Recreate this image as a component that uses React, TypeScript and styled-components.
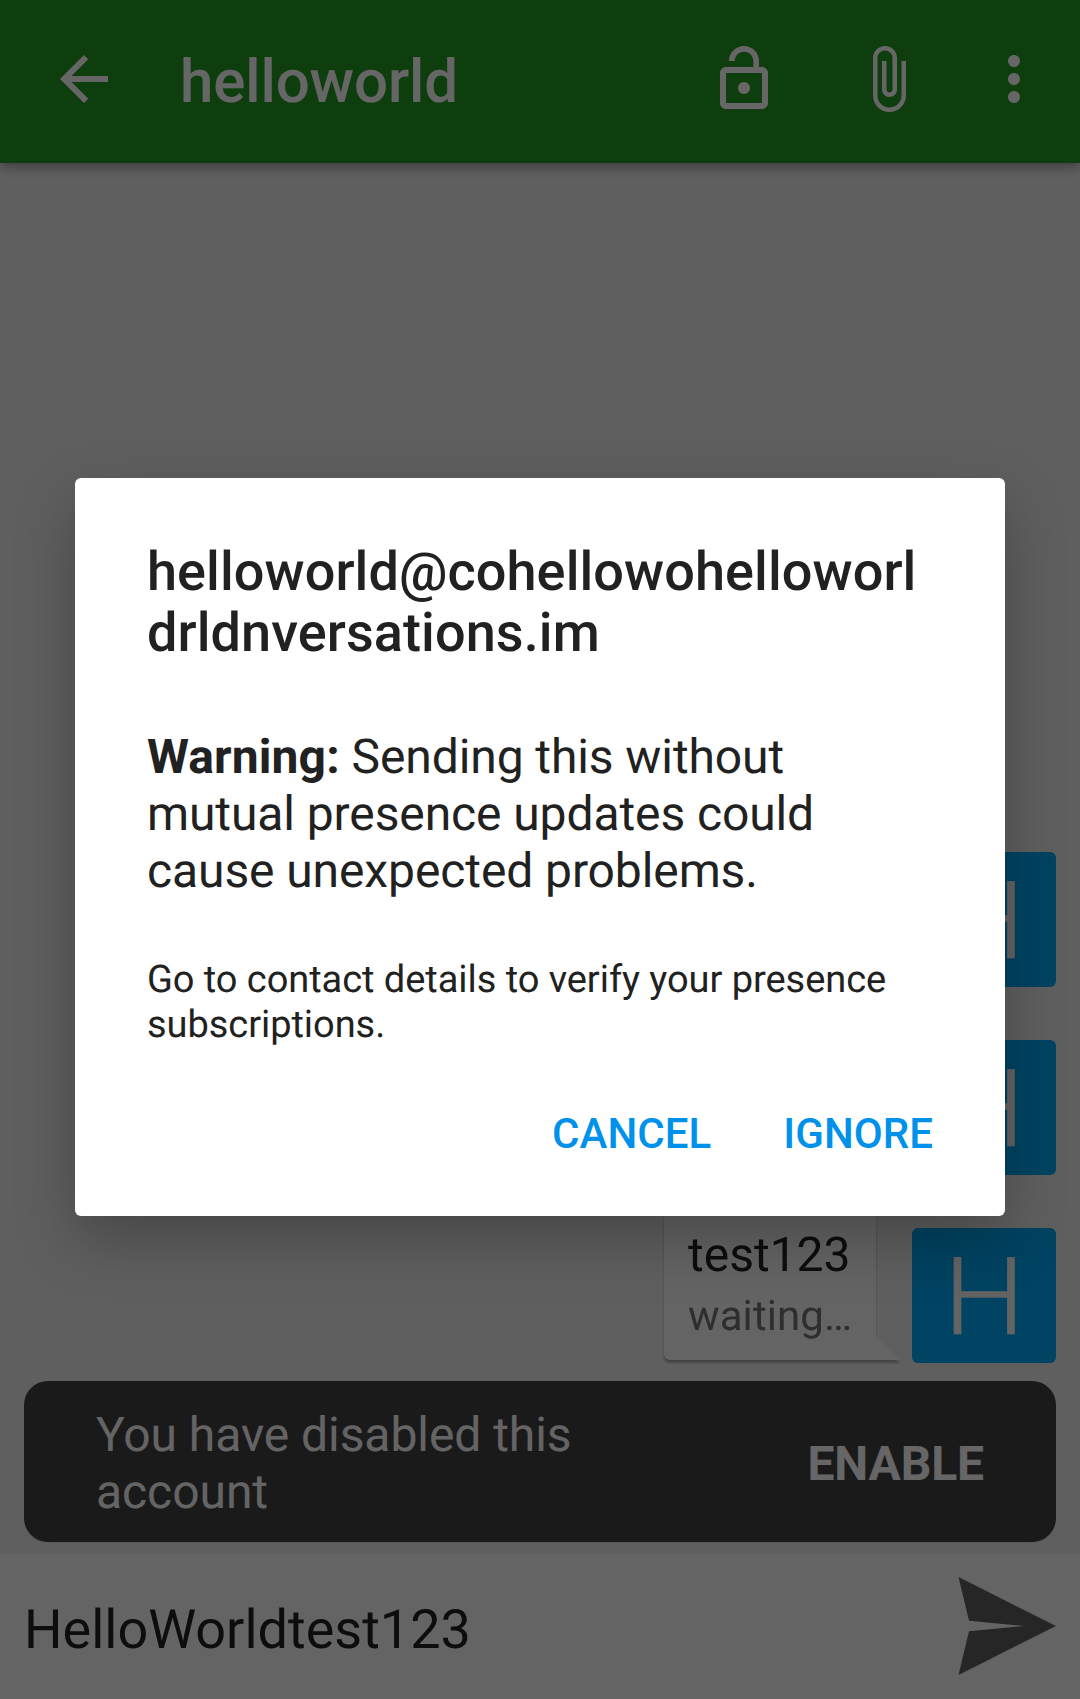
import React from 'react';
import styled, { createGlobalStyle } from 'styled-components';

const GlobalStyle = createGlobalStyle`
  html, body { margin: 0; padding: 0; }
  body { font-family: Roboto, "Noto Sans", sans-serif; text-rendering: geometricPrecision; }
  * { box-sizing: border-box; }
  h1, h2, p { margin: 0; }
  button { border: 0; padding: 0; background: none; font-family: inherit; }
`;

const Screen = styled.div`
  position: relative;
  width: 1080px;
  height: 1699px;
  overflow: hidden;
  display: flex;
  flex-direction: column;
  background: #eeeeee;
`;

const Toolbar = styled.header`
  height: 163px;
  flex: none;
  display: flex;
  align-items: center;
  padding: 0 30px 5px 48px;
  background: #259b24;
  color: #fff;
  z-index: 1;
  box-shadow: 0 4px 12px rgba(0, 0, 0, 0.36);
`;

const ToolbarTitle = styled.h1`
  flex: 1;
  margin-left: 60px;
  padding-top: 6px;
  font-size: 60px;
  line-height: 70px;
  font-weight: 500;
  letter-spacing: -0.1px;
`;

const ToolbarButton = styled.button<{ $gap?: number }>`
  width: 72px;
  height: 72px;
  margin-left: ${(p) => p.$gap ?? 0}px;
  color: inherit;
  svg { display: block; width: 100%; height: 100%; fill: currentColor; }
`;

const Messages = styled.main`
  flex: 1;
  min-height: 0;
  display: flex;
  flex-direction: column;
  justify-content: flex-end;
  gap: 53px;
  padding: 0 24px 18px;
`;

const MessageRow = styled.div`
  display: flex;
  justify-content: flex-end;
  align-items: flex-end;
  height: 135px;
`;

const BubbleWrap = styled.div`
  display: flex;
  align-items: flex-end;
  margin: 0 12px 3px 0;
  filter: drop-shadow(0 3px 1px rgba(0, 0, 0, 0.28));
`;

const Bubble = styled.div`
  width: 212px;
  height: 148px;
  padding: 14px 0 0 24px;
  background: #fafafa;
  border-radius: 6px 0 0 6px;
`;

const BubbleTail = styled.div`
  width: 24px;
  height: 24px;
  background: #fafafa;
  clip-path: polygon(0 0, 100% 100%, 0 100%);
`;

const MessageText = styled.p`
  font-size: 48px;
  line-height: 57px;
  color: #212121;
`;

const MessageStatus = styled.p`
  margin-top: 9px;
  font-size: 42px;
  line-height: 50px;
  letter-spacing: 0.1px;
  color: #737373;
`;

const Avatar = styled.div`
  width: 144px;
  height: 135px;
  display: flex;
  align-items: center;
  justify-content: center;
  border-radius: 6px;
  background: #03a9f4;
  color: #fafafa;
  font-size: 108px;
  line-height: 135px;
  font-weight: 300;
`;

const AvatarLetter = styled.span`
  padding-top: 5px;
  transform: scaleX(1.06);
  -webkit-text-stroke: 0.6px #fafafa;
`;

const Snackbar = styled.section`
  flex: none;
  height: 161px;
  margin: 0 24px 12px;
  padding: 2px 72px 0;
  display: flex;
  align-items: center;
  justify-content: space-between;
  border-radius: 24px;
  background: #424242;
  box-shadow: 0 1px 1px rgba(0, 0, 0, 0.08);
`;

const SnackbarText = styled.p`
  width: 520px;
  font-size: 48px;
  line-height: 57px;
  letter-spacing: -0.06px;
  color: #fafafa;
`;

const SnackbarAction = styled.button`
  padding-top: 2px;
  font-size: 48px;
  line-height: 57px;
  font-weight: 700;
  letter-spacing: -0.1px;
  color: #fff;
`;

const Composer = styled.footer`
  flex: none;
  height: 145px;
  display: flex;
  align-items: center;
  justify-content: space-between;
  padding: 0 24px;
  background: #fafafa;
`;

const ComposerText = styled.p`
  padding-top: 8px;
  font-size: 54px;
  line-height: 64px;
  color: #212121;
`;

const SendIcon = styled.svg`
  width: 98px;
  height: 98px;
  margin-bottom: 2px;
  fill: #606060;
`;

const Scrim = styled.div`
  position: absolute;
  inset: 0;
  z-index: 2;
  display: flex;
  align-items: center;
  justify-content: center;
  padding-bottom: 5px;
  background: rgba(0, 0, 0, 0.6);
`;

const Dialog = styled.div`
  width: 930px;
  height: 738px;
  display: flex;
  flex-direction: column;
  padding: 64px 72px 50px;
  border-radius: 6px;
  background: #fff;
  color: #212121;
  box-shadow: 0 24px 60px rgba(0, 0, 0, 0.26);
`;

const DialogTitle = styled.h2`
  font-size: 54px;
  line-height: 61px;
  font-weight: 500;
  letter-spacing: 0.09px;
  word-break: break-all;
`;

const Warning = styled.p`
  margin-top: 64px;
  font-size: 48px;
  line-height: 57px;
  letter-spacing: -0.1px;
  b { letter-spacing: 0.1px; }
`;

const Hint = styled.p`
  margin-top: 59px;
  font-size: 38px;
  line-height: 45px;
  letter-spacing: -0.05px;
`;

const Actions = styled.div`
  display: flex;
  justify-content: flex-end;
  gap: 72px;
  margin-top: auto;
`;

const ActionButton = styled.button`
  font-size: 42px;
  line-height: 64px;
  font-weight: 500;
  letter-spacing: 0.05px;
  color: #0091ea;
`;

const toolbarIcons = [
  {
    label: 'Encryption',
    gap: 0,
    d: 'M12 17c1.1 0 2-.9 2-2s-.9-2-2-2-2 .9-2 2 .9 2 2 2zm6-9h-1V6c0-2.76-2.24-5-5-5S7 3.24 7 6h1.9c0-1.71 1.39-3.1 3.1-3.1 1.71 0 3.1 1.39 3.1 3.1v2H6c-1.1 0-2 .9-2 2v10c0 1.1.9 2 2 2h12c1.1 0 2-.9 2-2V10c0-1.1-.9-2-2-2zm0 12H6V10h12v10z',
  },
  {
    label: 'Attach',
    gap: 72,
    d: 'M16.5 6v11.5c0 2.21-1.79 4-4 4s-4-1.79-4-4V5c0-1.38 1.12-2.5 2.5-2.5s2.5 1.12 2.5 2.5v10.5c0 .55-.45 1-1 1s-1-.45-1-1V6H10v9.5c0 1.38 1.12 2.5 2.5 2.5s2.5-1.12 2.5-2.5V5c0-2.21-1.79-4-4-4S7 2.79 7 5v12.5c0 3.04 2.46 5.5 5.5 5.5s5.5-2.46 5.5-5.5V6h-1.5z',
  },
  {
    label: 'More',
    gap: 54,
    d: 'M12 8c1.1 0 2-.9 2-2s-.9-2-2-2-2 .9-2 2 .9 2 2 2zm0 2c-1.1 0-2 .9-2 2s.9 2 2 2 2-.9 2-2-.9-2-2-2zm0 6c-1.1 0-2 .9-2 2s.9 2 2 2 2-.9 2-2-.9-2-2-2z',
  },
];

export default function App() {
  return (
    <>
      <GlobalStyle />
      <Screen>
        <Toolbar>
          <ToolbarButton aria-label="Back">
            <svg viewBox="0 0 24 24">
              <path d="M20 11H7.83l5.59-5.59L12 4l-8 8 8 8 1.41-1.41L7.83 13H20v-2z" />
            </svg>
          </ToolbarButton>
          <ToolbarTitle>helloworld</ToolbarTitle>
          {toolbarIcons.map((icon) => (
            <ToolbarButton key={icon.label} aria-label={icon.label} $gap={icon.gap}>
              <svg viewBox="0 0 24 24">
                <path d={icon.d} />
              </svg>
            </ToolbarButton>
          ))}
        </Toolbar>

        <Messages>
          <MessageRow>
            <Avatar><AvatarLetter>H</AvatarLetter></Avatar>
          </MessageRow>
          <MessageRow>
            <Avatar><AvatarLetter>H</AvatarLetter></Avatar>
          </MessageRow>
          <MessageRow>
            <BubbleWrap>
              <Bubble>
                <MessageText>test123</MessageText>
                <MessageStatus>waiting…</MessageStatus>
              </Bubble>
              <BubbleTail />
            </BubbleWrap>
            <Avatar><AvatarLetter>H</AvatarLetter></Avatar>
          </MessageRow>
        </Messages>

        <Snackbar>
          <SnackbarText>You have disabled this account</SnackbarText>
          <SnackbarAction>ENABLE</SnackbarAction>
        </Snackbar>

        <Composer>
          <ComposerText>HelloWorldtest123</ComposerText>
          <SendIcon viewBox="0 0 98 98">
            <path d="M0.5 0 98 49 0.5 98 11 54.2 66 49 11 43.8Z" />
          </SendIcon>
        </Composer>

        <Scrim>
          <Dialog role="dialog">
            <DialogTitle>helloworld@cohellowohelloworldrldnversations.im</DialogTitle>
            <Warning>
              <b>Warning:</b> Sending this without mutual presence updates could cause unexpected
              problems.
            </Warning>
            <Hint>Go to contact details to verify your presence subscriptions.</Hint>
            <Actions>
              <ActionButton>CANCEL</ActionButton>
              <ActionButton>IGNORE</ActionButton>
            </Actions>
          </Dialog>
        </Scrim>
      </Screen>
    </>
  );
}
